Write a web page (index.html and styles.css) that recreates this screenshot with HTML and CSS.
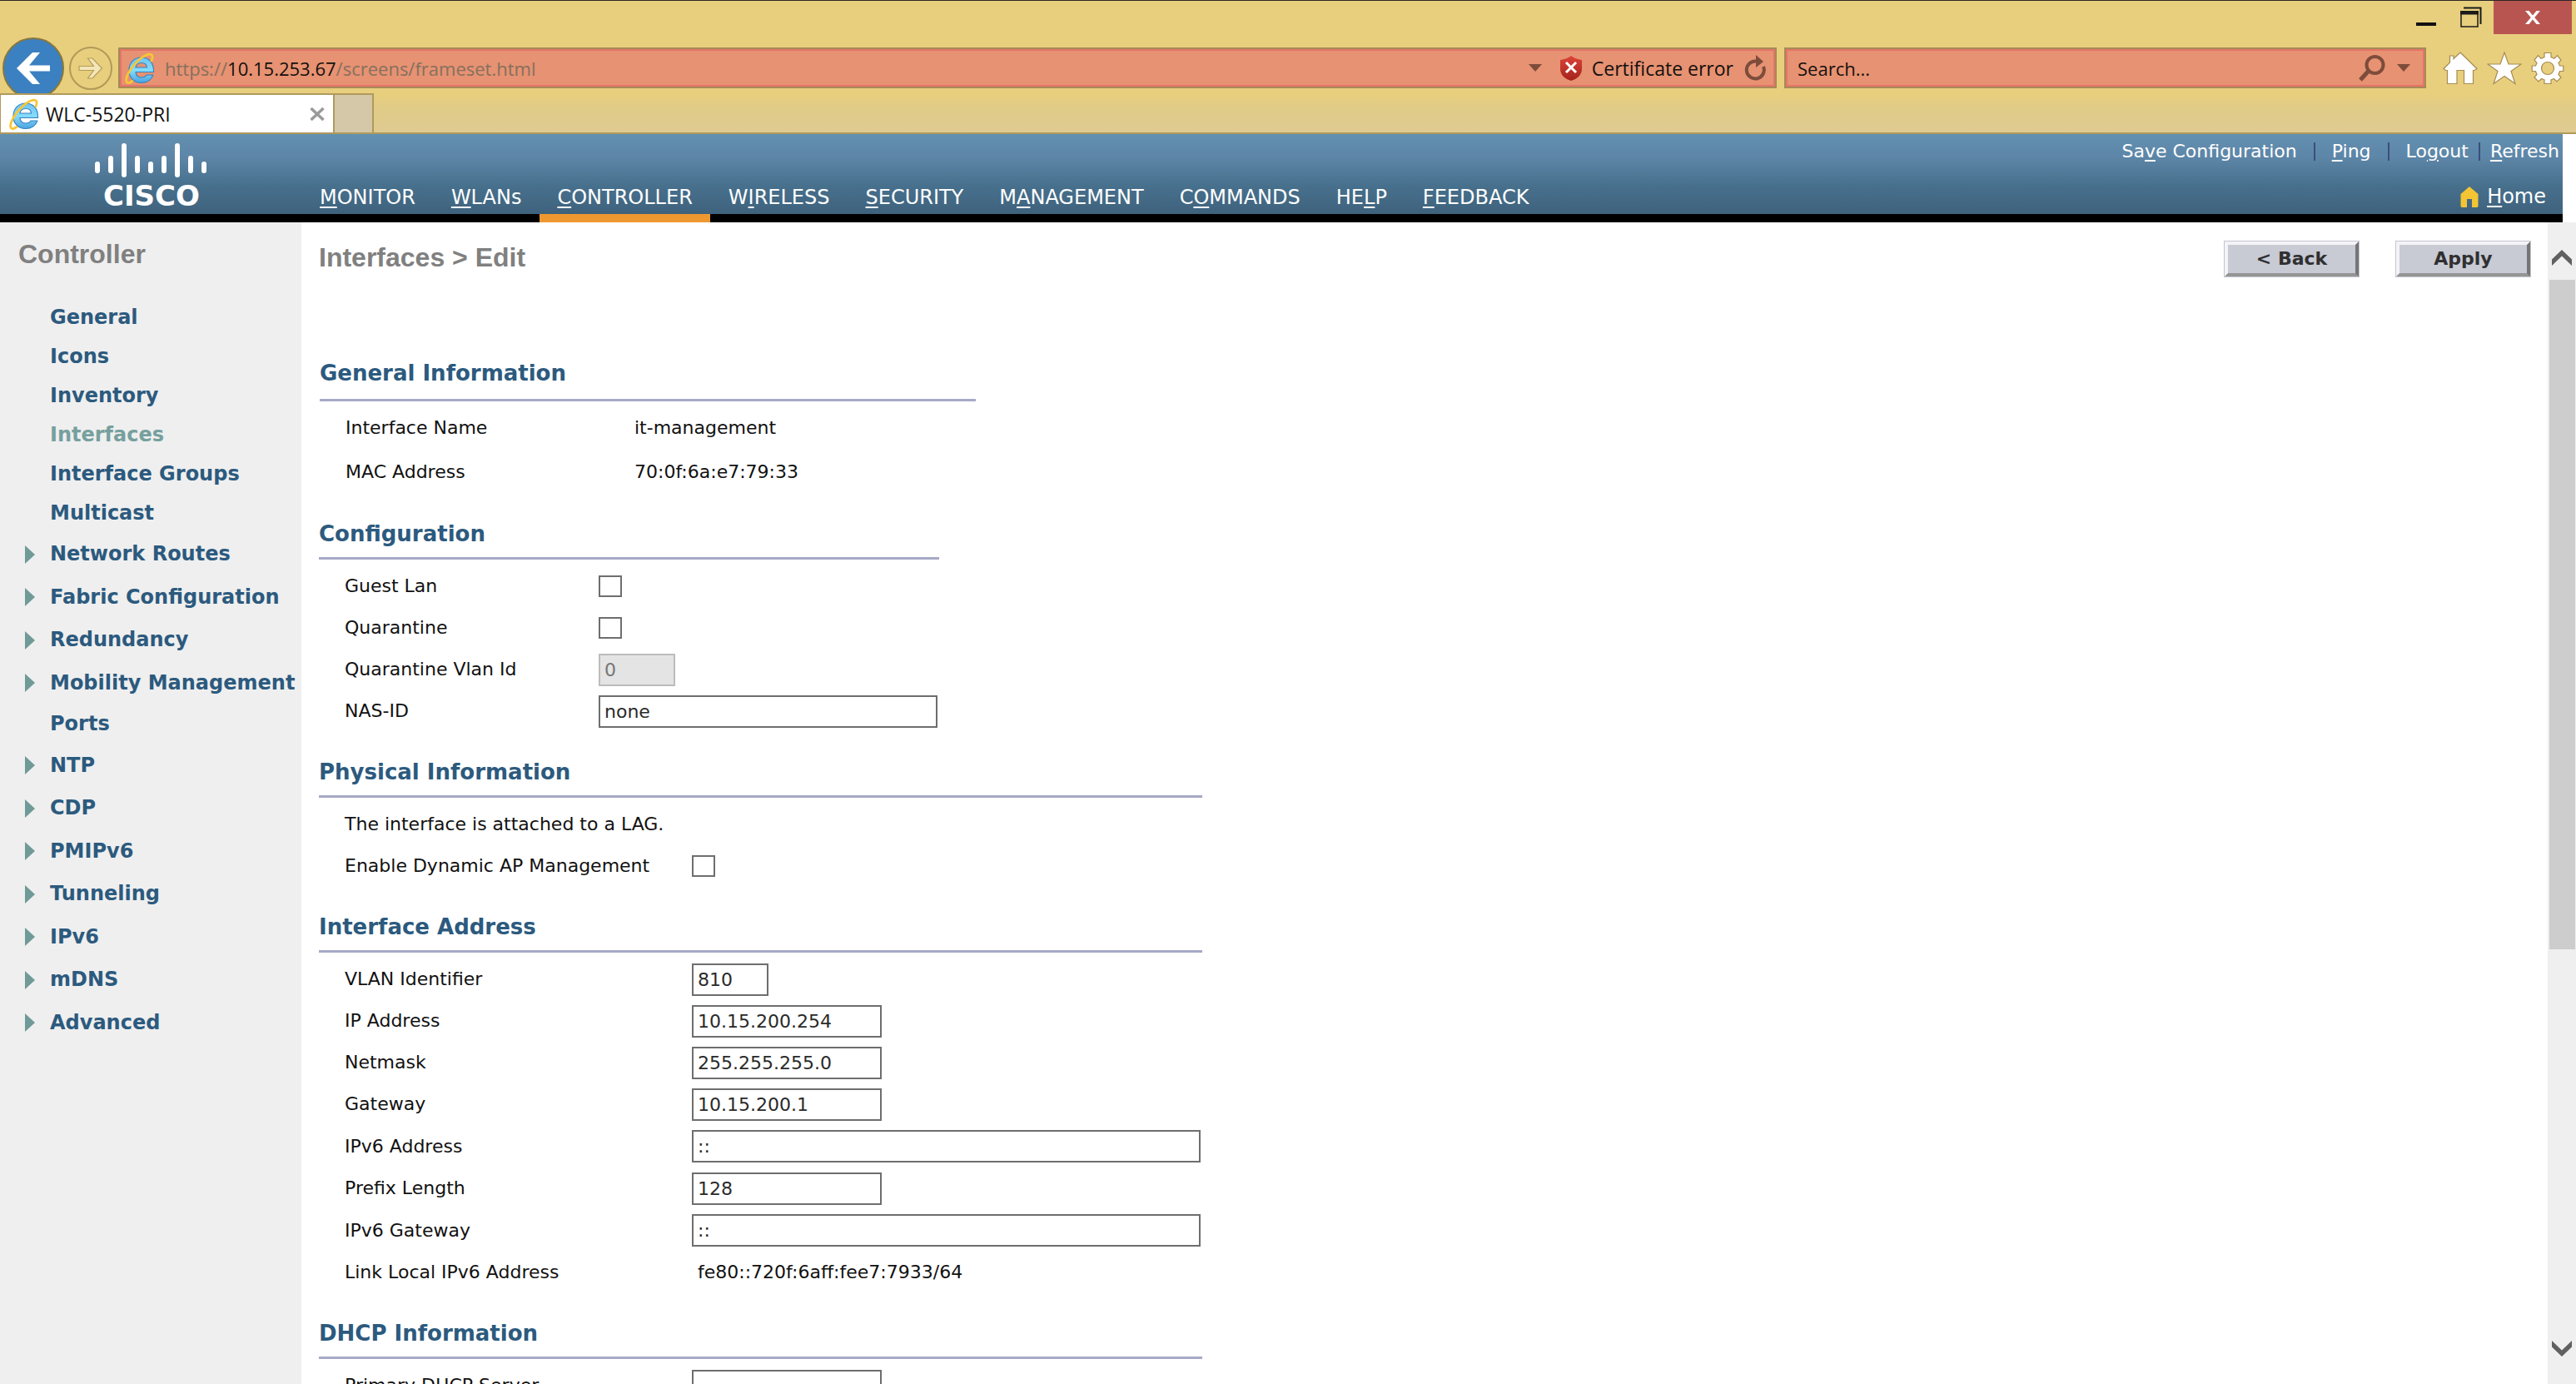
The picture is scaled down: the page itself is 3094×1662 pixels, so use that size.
FILE: index.html
```html
<!DOCTYPE html>
<html lang="en">
<head>
<meta charset="utf-8">
<title>WLC-5520-PRI</title>
<link rel="stylesheet" href="styles.css">
</head>
<body>
<svg class="defs" aria-hidden="true">
  <defs>
    <linearGradient id="ie-blue" x1="0" y1="0" x2="0" y2="1">
      <stop offset="0" stop-color="#6fc4f2"/><stop offset="0.5" stop-color="#86dcfb"/><stop offset="1" stop-color="#4aa3e0"/>
    </linearGradient>
    <linearGradient id="shield-red" x1="0" y1="0" x2="0" y2="1">
      <stop offset="0" stop-color="#dc4438"/><stop offset="1" stop-color="#a3231c"/>
    </linearGradient>
    <symbol id="ie" viewBox="0 0 36 38">
      <path d="M34.500 23.500H13C13.300 27.500 16 30 20 30C22.800 30 24.800 29 26 27H33.800C32 33 26.500 36.500 19.800 36.500C11 36.500 5 30.500 5 21.500C5 12.500 11 6 19.800 6C28.500 6 35 12 34.500 23.500ZM26.500 18C26.300 14.500 23.800 12.500 20 12.500C16.200 12.500 13.500 14.500 13 18Z" fill="url(#ie-blue)" stroke="#3583c2" stroke-width="1.200"/>
      <path d="M9 34.500C3.500 38.500 0 36.500 2.500 29C5.500 20 17 6.500 26 3C32.500 0.500 34.500 3.500 32 10" fill="none" stroke="#f7c634" stroke-width="2.800" stroke-linecap="round"/>
    </symbol>
  </defs>
</svg>

<header class="browser">
  <div class="titlebar">
    <button class="win-btn" aria-label="Minimize"><svg width="24" height="5" viewBox="0 0 24 5"><path d="M0 0H24V4H0Z" fill="#111"/></svg></button>
    <button class="win-btn" aria-label="Restore"><svg width="26" height="26" viewBox="0 0 26 26"><path d="M4 1.500H24.500V21" fill="none" stroke="#1b1b1b" stroke-width="2"/><path d="M1 6H21V24H1Z" fill="none" stroke="#1b1b1b" stroke-width="1.500"/><path d="M0 5H22V9.500H0Z" fill="#1b1b1b"/></svg></button>
    <button class="win-btn win-close" aria-label="Close"><svg width="20" height="16" viewBox="0 0 20 16"><path d="M1 0H5.500L10 5.500L14.500 0H19L12.200 8L19 16H14.500L10 10.500L5.500 16H1L7.800 8Z" fill="#fff"/></svg></button>
  </div>
  <div class="toolbar">
    <div class="history">
      <button class="nav-back" aria-label="Back"><svg width="42" height="40" viewBox="0 0 42 40"><path d="M20 1H29L16 16.500H41V23.500H16L29 39H20L1 20Z" fill="#fff"/></svg></button>
      <button class="nav-forward" aria-label="Forward"><svg width="30" height="28" viewBox="0 0 30 28"><path d="M1 11.500H18.500L11.500 2H17L28.500 14L17 26H11.500L18.500 16.500H1Z" fill="#f3e6b8" stroke="#b59c57" stroke-width="1.200"/></svg></button>
    </div>
    <div class="address">
      <svg width="36" height="38"><use href="#ie"/></svg>
      <span class="url">https://<b>10.15.253.67</b>/screens/frameset.html</span>
      <svg width="16" height="9" viewBox="0 0 16 9"><path d="M0 0H16L8 9Z" fill="#7d4c3b"/></svg>
      <svg class="shield" width="28" height="30" viewBox="0 0 28 30"><path d="M14 0C17 2.500 22 4.500 27 5V16C27 23 21 28 14 30C7 28 1 23 1 16V5C6 4.500 11 2.500 14 0Z" fill="url(#shield-red)"/><path d="M8 8L20 20M20 8L8 20" stroke="#fff" stroke-width="3"/></svg>
      <span class="cert">Certificate error</span>
      <svg class="refresh" width="28" height="32" viewBox="0 0 28 32"><path d="M15 7.500A10.500 10.500 0 1 0 24 14" fill="none" stroke="#7d4c3b" stroke-width="4"/><path d="M15 0L24 8L15 15Z" fill="#7d4c3b"/></svg>
    </div>
    <div class="search">
      <input class="search-input" aria-label="Search" placeholder="Search...">
      <svg width="32" height="32" viewBox="0 0 32 32"><circle cx="19.500" cy="12" r="10" fill="none" stroke="#7d4c3b" stroke-width="4"/><path d="M12 19L2 30" stroke="#7d4c3b" stroke-width="5"/></svg>
      <svg width="16" height="9" viewBox="0 0 16 9"><path d="M0 0H16L8 9Z" fill="#7d4c3b"/></svg>
    </div>
    <div class="tools">
      <svg width="42" height="40" viewBox="0 0 42 40"><path d="M21 1L41 20.500L38 22.500H36.500V38.500H25.500V22.500H17V38.500H5.500V22.500H3.500L1 20.500L8.500 13V5H13V8.500Z" fill="#fff" stroke="#a68c50" stroke-width="1.200"/></svg>
      <svg width="42" height="40" viewBox="0 0 42 40"><path d="M21 1L26 15H41L29 23.500L34 38.500L21 29.500L8 38.500L13 23.500L1 15H16Z" fill="#fff" stroke="#a68c50" stroke-width="1.200"/></svg>
      <svg width="40" height="40" viewBox="0 0 40 40"><path d="M16 1.500H24V6.500L28 8.200L31.500 4.700L36 10L33 13.500L34.500 17H38.800V23.500H34.500L33 27.500L36 31L31 36L27.500 32.500L24 34V38.500H16V34L12.500 32.500L9 36L4 31L7 27.500L5.500 23.500H1.200V17H5.500L7 13.500L4 10L8.500 4.700L12 8.200L16 6.500Z" fill="#fff" stroke="#a68c50" stroke-width="1.200"/><circle cx="20" cy="20" r="7.500" fill="#e8cf7e" stroke="#a68c50" stroke-width="1.200"/></svg>
    </div>
  </div>
  <div class="tabs">
    <div class="tab">
      <svg width="36" height="38"><use href="#ie"/></svg>
      <span>WLC-5520-PRI</span>
      <button class="tab-close" aria-label="Close tab"><svg width="18" height="16" viewBox="0 0 18 16"><path d="M1.500 1L16.500 15M16.500 1L1.500 15" stroke="#9a9a9a" stroke-width="3.500"/></svg></button>
    </div>
    <button class="tab-new" aria-label="New tab"></button>
  </div>
</header>

<div class="banner">
  <div class="logo">
    <svg width="136" height="44" viewBox="0 0 136 44"><path d="M5 26V34M21 19V34M37 4V39M53 19V34M69 26V34M85 19V34M101 4V39M117 19V34M133 26V34" stroke="#fff" stroke-width="6" stroke-linecap="round"/></svg>
    <span>CISCO</span>
  </div>
  <nav class="menu">
    <a href="#"><u>M</u>ONITOR</a><a href="#"><u>W</u>LANs</a><a href="#" class="current"><u>C</u>ONTROLLER</a><a href="#">W<u>I</u>RELESS</a><a href="#"><u>S</u>ECURITY</a><a href="#">M<u>A</u>NAGEMENT</a><a href="#">C<u>O</u>MMANDS</a><a href="#">HE<u>L</u>P</a><a href="#"><u>F</u>EEDBACK</a>
  </nav>
  <div class="account">
    <div class="links">
      <a href="#">Sa<u>v</u>e Configuration</a><i></i><a href="#"><u>P</u>ing</a><i></i><a href="#">Lo<u>g</u>out</a><i class="tight"></i><a href="#"><u>R</u>efresh</a>
    </div>
    <a class="home" href="#"><svg width="22" height="25" viewBox="0 0 22 25"><path d="M11 0L21.500 9V23Q21.500 25 20 25H14V15H8V25H2Q0.500 25 0.500 23V9Z" fill="#f3c433"/></svg><span><u>H</u>ome</span></a>
  </div>
</div>

<div class="frames">
  <aside class="sidebar">
    <h2 class="title">Controller</h2>
    <ul>
      <li><a href="#">General</a></li>
      <li><a href="#">Icons</a></li>
      <li><a href="#">Inventory</a></li>
      <li><a href="#" class="active">Interfaces</a></li>
      <li><a href="#">Interface Groups</a></li>
      <li><a href="#">Multicast</a></li>
      <li class="group"><a href="#">Network Routes</a></li>
      <li class="group"><a href="#">Fabric Configuration</a></li>
      <li class="group"><a href="#">Redundancy</a></li>
      <li class="group"><a href="#">Mobility Management</a></li>
      <li><a href="#">Ports</a></li>
      <li class="group"><a href="#">NTP</a></li>
      <li class="group"><a href="#">CDP</a></li>
      <li class="group"><a href="#">PMIPv6</a></li>
      <li class="group"><a href="#">Tunneling</a></li>
      <li class="group"><a href="#">IPv6</a></li>
      <li class="group"><a href="#">mDNS</a></li>
      <li class="group"><a href="#">Advanced</a></li>
    </ul>
  </aside>

  <main class="content">
    <div class="page-head">
      <h1 class="title">Interfaces &gt; Edit</h1>
      <button class="btn">&lt; Back</button>
      <button class="btn">Apply</button>
    </div>
    <form>
      <section class="general">
        <h3>General Information</h3>
        <div class="row"><span>Interface Name</span><span>it-management</span></div>
        <div class="row"><span>MAC Address</span><span>70:0f:6a:e7:79:33</span></div>
      </section>
      <section class="config">
        <h3>Configuration</h3>
        <div class="row"><label for="guest">Guest Lan</label><input type="checkbox" id="guest"></div>
        <div class="row"><label for="quar">Quarantine</label><input type="checkbox" id="quar"></div>
        <div class="row"><label for="qvlan">Quarantine Vlan Id</label><input type="text" class="short" id="qvlan" value="0" disabled></div>
        <div class="row"><label for="nas">NAS-ID</label><input type="text" class="long" id="nas" value="none"></div>
      </section>
      <section>
        <h3>Physical Information</h3>
        <div class="row"><span>The interface is attached to a LAG.</span></div>
        <div class="row"><label for="dyn">Enable Dynamic AP Management</label><input type="checkbox" id="dyn"></div>
      </section>
      <section>
        <h3>Interface Address</h3>
        <div class="row"><label for="vlan">VLAN Identifier</label><input type="text" class="short" id="vlan" value="810"></div>
        <div class="row"><label for="ip">IP Address</label><input type="text" id="ip" value="10.15.200.254"></div>
        <div class="row"><label for="mask">Netmask</label><input type="text" id="mask" value="255.255.255.0"></div>
        <div class="row"><label for="gw">Gateway</label><input type="text" id="gw" value="10.15.200.1"></div>
        <div class="row tall"><label for="ip6">IPv6 Address</label><input type="text" class="long" id="ip6" value="::"></div>
        <div class="row"><label for="prefix">Prefix Length</label><input type="text" id="prefix" value="128"></div>
        <div class="row tall"><label for="gw6">IPv6 Gateway</label><input type="text" class="long" id="gw6" value="::"></div>
        <div class="row"><span>Link Local IPv6 Address</span><span class="static">fe80::720f:6aff:fee7:7933/64</span></div>
      </section>
      <section>
        <h3>DHCP Information</h3>
        <div class="row"><label for="dhcp">Primary DHCP Server</label><input type="text" id="dhcp"></div>
      </section>
    </form>
  </main>

  <div class="scrollbar" aria-hidden="true">
    <svg width="26" height="20" viewBox="0 0 26 20"><path d="M1 19V11.500L13 0L25 11.500V19L13 7.500Z" fill="#606060"/></svg>
    <div class="track"><div class="thumb"></div></div>
    <svg width="26" height="20" viewBox="0 0 26 20"><path d="M1 1V8.500L13 20L25 8.500V1L13 12.500Z" fill="#606060"/></svg>
  </div>
</div>
</body>
</html>
```

FILE: styles.css
```css
* { box-sizing: border-box; }

body {
  margin: 0;
  height: 100vh;
  overflow: hidden;
  display: flex;
  flex-direction: column;
  background: #fff;
  color: #111;
  font: 22px/30px "DejaVu Sans", Verdana, sans-serif;
}

.defs { position: absolute; width: 0; height: 0; }
svg { flex: none; display: block; }
button { font: inherit; color: inherit; border: 0; padding: 0; background: none; }
a { color: inherit; text-decoration: none; }
u { text-decoration-thickness: 2px; text-underline-offset: 3px; }

/* Browser chrome */
.browser {
  flex: none;
  border-top: 1px solid #2c2626;
  border-bottom: 2px solid #b09a5c;
  background: linear-gradient(#e8cf7e 112px, #e0cb88 130px, #dfcb92);
  font-family: "Open Sans", "Segoe UI", sans-serif;
}
.titlebar {
  height: 56px;
  padding-right: 5px;
  display: flex;
  justify-content: flex-end;
  align-items: flex-start;
}
.win-btn { width: 54px; height: 40px; display: flex; align-items: center; justify-content: center; }
.win-btn:first-child { padding-top: 16px; }
.win-close { width: 94px; background: #b85550; }

.toolbar { height: 49px; display: flex; align-items: stretch; padding-right: 14px; }
.history { width: 142px; padding-left: 3px; display: flex; gap: 6px; align-items: center; }
.nav-back, .nav-forward { flex: none; border-radius: 50%; display: flex; align-items: center; justify-content: center; }
.nav-back { width: 74px; height: 74px; background: #3b80c1; border: 2px solid #86773f; }
.nav-forward { width: 52px; height: 52px; border: 2px solid #b09a58; }

.address, .search {
  display: flex;
  align-items: center;
  background: #e79272;
  border: 2px solid #a68a55;
  box-shadow: inset 0 0 0 2px #e5746a;
}
.address { flex: 1; padding: 0 10px 0 6px; color: #14100e; }
.url { flex: 1; margin-left: 12px; color: #85705f; }
.url b { font-weight: 400; color: #14100e; }
.cert { font-size: 23px; }
.shield { margin: 0 11px 0 21px; }
.refresh { margin-left: 12px; }
.search { width: 771px; margin-left: 9px; padding: 0 17px 0 14px; gap: 14px; }
.search-input { flex: 1; border: 0; padding: 0; background: none; font: inherit; outline: 0; }
.search-input::placeholder { color: #14100e; opacity: 1; }
.tools { display: flex; align-items: center; gap: 11px; margin-left: 20px; }

.tabs { display: flex; margin-top: 6px; height: 47px; position: relative; }
.tab {
  width: 402px;
  padding: 0 10px;
  display: flex;
  align-items: center;
  gap: 8px;
  background: #fff;
  border: 2px solid #b09a5c;
  border-width: 2px 2px 0 1px;
  font-size: 23px;
}
.tab-close { margin-left: auto; }
.tab-new { width: 47px; background: #d4c8a8; border: 2px solid #b09a5c; border-width: 2px 2px 0 0; }

/* Cisco banner */
.banner {
  flex: none;
  height: 106px;
  margin-right: 16px;
  display: flex;
  color: #fff;
  background: #000 linear-gradient(#6390b0, #5d86a8 28%, #47708d 65%, #3f627c) 0 0 / 100% 96px no-repeat;
}
.logo { width: 363px; padding: 10px 0 0 112px; display: flex; flex-direction: column; }
.logo span { padding-left: 12px; font-size: 34px; font-weight: 700; line-height: 40px; }
.menu { display: flex; gap: 1px; font-size: 24px; }
.menu a { padding: 56px 21px 0; line-height: 40px; border-bottom: 10px solid transparent; }
.menu .current { border-color: #ef9830; }
.account { margin-left: auto; display: flex; flex-direction: column; align-items: flex-end; padding: 6px 4px 0 0; }
.links { display: flex; align-items: center; }
.links i { width: 2px; height: 22px; margin: 0 20px; background: #3d4d80; }
.links .tight { margin: 0 12px; }
.home { display: flex; align-items: center; gap: 10px; margin: 24px 16px 0 0; font-size: 24px; }

/* Frames */
.frames { flex: 1; min-height: 0; display: flex; }
.title { margin: 0; font: 700 32px/40px "Liberation Sans", Arial, sans-serif; color: #808080; }

.sidebar { flex: none; width: 362px; background: #efefef; padding: 18px 0 0 22px; }
.sidebar ul { list-style: none; margin: 0; padding: 33px 0 0; font-size: 24px; font-weight: 700; color: #2c5a7e; }
.sidebar li { height: 47px; padding-left: 38px; line-height: 47px; white-space: nowrap; }
.sidebar .group { height: 51px; display: flex; align-items: center; padding-left: 8px; gap: 18px; }
.sidebar .group:nth-child(even) { height: 52px; }
.sidebar .group::before { content: ""; border: solid transparent; border-width: 11px 0 11px 12px; border-left-color: #6f9a98; }
.sidebar .active { color: #76a09e; }

.content { flex: 1; min-width: 0; padding: 22px 20px 0 21px; overflow: hidden; }
.page-head { display: flex; align-items: flex-start; gap: 43px; }
.page-head .title { flex: 1; }
.btn {
  width: 163px;
  height: 44px;
  background: #c8cad4;
  border: 5px solid;
  border-color: #f4f4f8 #757575 #959595 #f4f4f8;
  outline: 1px solid #c4c4d0;
  outline-offset: -1px;
  color: #303030;
  font-weight: 700;
}

section { width: 1061px; }
section h3 {
  margin: 0 0 7px;
  padding: 27px 0 7px;
  border-bottom: 3px solid #a6a9c6;
  font-size: 26px;
  line-height: 42px;
  color: #2c5a7e;
}
.row { display: flex; align-items: center; height: 50px; padding-left: 31px; }
.row.tall { height: 51px; }
.row > :first-child { width: 417px; }
.general { width: 788px; margin: 67px 0 0 1px; }
.general h3 { margin-bottom: 5px; padding-bottom: 10px; }
.general .row { height: 53px; }
.general .row > :first-child { width: 347px; }
.config { width: 745px; }
.config .row > :first-child { width: 305px; }
.static { padding-left: 7px; }

input[type="text"] {
  width: 228px;
  height: 39px;
  padding: 0 5px;
  border: 2px solid #6e6e6e;
  background: #fff;
  color: #2a2a2a;
  font: inherit;
}
input[type="text"].short { width: 92px; }
input[type="text"].long { width: auto; flex: 1; margin-right: 2px; }
input[type="text"]:disabled { background: #e4e4e4; border-color: #bcbcbc; color: #777; }
input[type="checkbox"] {
  appearance: none;
  width: 28px;
  height: 26px;
  margin: 0;
  border: 2px solid #6e6e6e;
  background: #fff;
}

.scrollbar { flex: none; width: 34px; background: #efefef; display: flex; flex-direction: column; align-items: center; padding: 33px 0; gap: 16px; }
.track { flex: 1; width: 31px; }
.thumb { height: 64%; background: #cdcdcd; }
```
